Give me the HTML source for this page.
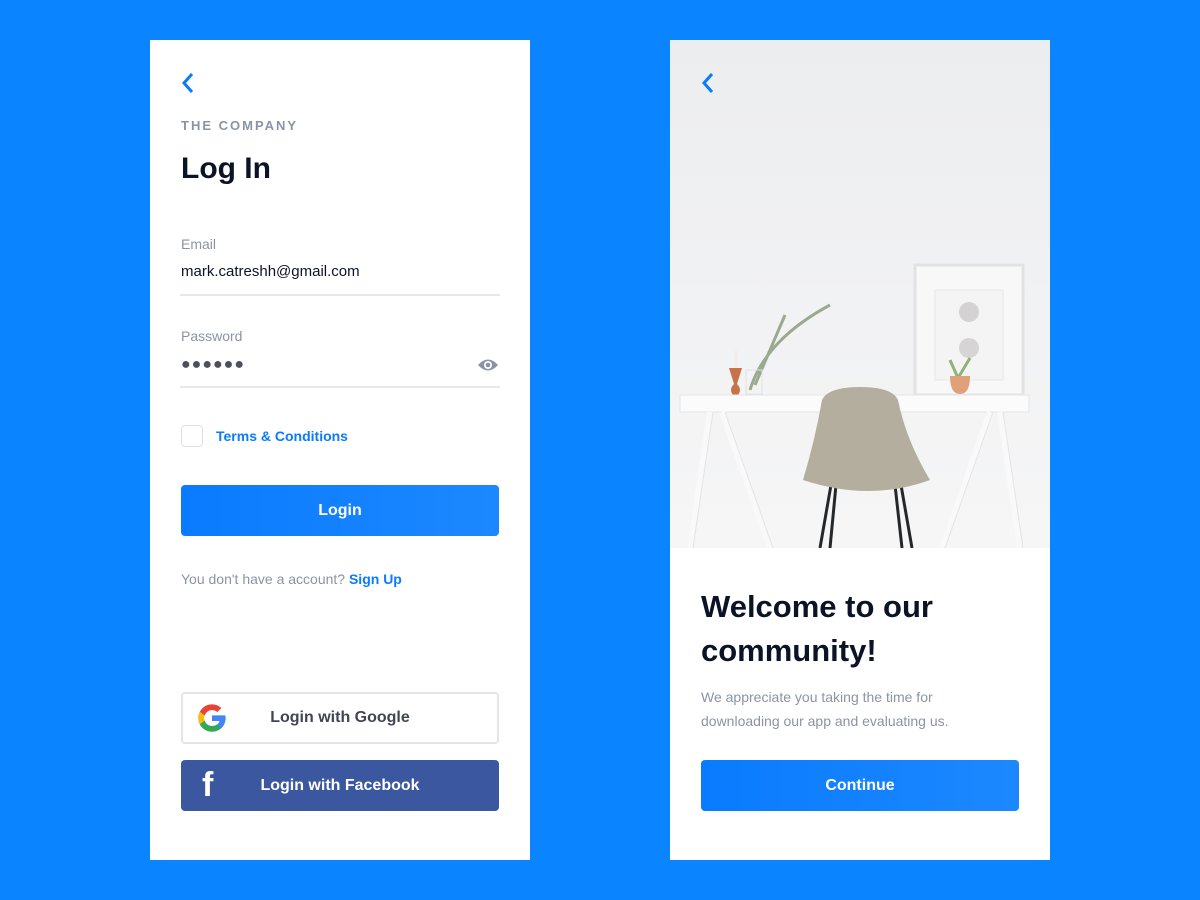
<!DOCTYPE html>
<html><head><style>
*{margin:0;padding:0;box-sizing:border-box}
body{width:1200px;height:900px;background:#0a85ff;font-family:"Liberation Sans",sans-serif;position:relative;overflow:hidden}
.card{position:absolute;top:40px;width:380px;height:820px;background:#fff}
.a{position:absolute}
.lbl{font-size:14px;color:#8a94a6}
.btn{position:absolute;left:31px;width:318px;height:51px;border-radius:4px;background:linear-gradient(90deg,#0a7bff,#1c88ff);color:#fff;font-weight:bold;font-size:16px;display:flex;align-items:center;justify-content:center}
</style></head><body>
<div class="card" style="left:150px">
<svg class="a" style="left:30px;top:32px" width="16" height="22"><path d="M12 2 L4 11 L12 20" stroke="#0a7bff" stroke-width="3" fill="none"/></svg>
<div class="a" style="left:31px;top:78px;font-size:13px;font-weight:bold;letter-spacing:2px;color:#8a94a6">THE COMPANY</div>
<div class="a" style="left:31px;top:112px;font-size:30px;font-weight:bold;color:#0b1426">Log In</div>
<div class="a lbl" style="left:31px;top:196px">Email</div>
<div class="a" style="left:31px;top:223px;font-size:15px;color:#0b1426">mark.catreshh@gmail.com</div>
<div class="a" style="left:30px;top:254px;width:320px;height:2px;background:#e6e8ec"></div>
<div class="a lbl" style="left:31px;top:288px">Password</div>
<div class="a" style="left:31px;top:316px;font-size:16px;letter-spacing:1px;color:#4a505c">●●●●●●</div>
<svg class="a" style="left:327px;top:317px" width="22" height="16"><path d="M1 8 Q11 -3 21 8 Q11 19 1 8Z" fill="#8a94a6"/><circle cx="11" cy="8" r="4" fill="#fff"/><circle cx="11" cy="8" r="2.3" fill="#8a94a6"/></svg>
<div class="a" style="left:30px;top:346px;width:320px;height:2px;background:#e6e8ec"></div>
<div class="a" style="left:31px;top:385px;width:22px;height:22px;border:1.5px solid #dde0e5;border-radius:4px"></div>
<div class="a" style="left:66px;top:388px;font-size:14px;font-weight:bold;color:#0a7bff">Terms &amp; Conditions</div>
<div class="btn" style="top:445px">Login</div>
<div class="a" style="left:31px;top:531px;font-size:14px;color:#8a94a6">You don't have a account? <b style="color:#0a7bff">Sign Up</b></div>
<div class="a" style="left:31px;top:652px;width:318px;height:52px;border:2px solid #e3e5e9;border-radius:4px;display:flex;align-items:center;justify-content:center;font-size:16px;font-weight:bold;color:#3f4653">Login with Google</div>
<svg class="a" style="left:46px;top:662px" width="32" height="32" viewBox="0 0 48 48"><path d="M43.6 20H24v8.5h11.3C33.7 33.6 29.3 36 24 36c-6.6 0-12-5.4-12-12s5.4-12 12-12c3 0 5.8 1.1 7.900 3l6-6C34.3 5.6 29.4 3.5 24 3.5 12.7 3.5 3.5 12.7 3.5 24S12.7 44.5 24 44.5 44.5 36 44.5 24c0-1.4-.2-2.7-.9-4z" fill="#4285f4"/><path d="M6.3 14.7l7 5.1C15.1 15.3 19.2 12 24 12c3 0 5.8 1.1 7.9 3l6-6C34.3 5.6 29.4 3.5 24 3.5c-7.9 0-14.7 4.5-17.7 11.2z" fill="#ea4335"/><path d="M24 44.5c5.3 0 10.1-2 13.6-5.3l-6.3-5.3C29.3 35.3 26.8 36 24 36c-5.3 0-9.7-3.4-11.3-8.1l-7 5.4C9 40 16 44.5 24 44.5z" fill="#34a853"/><path d="M12.7 27.9c-.4-1.2-.7-2.5-.7-3.9s.3-2.7.7-3.9l-7-5.4C4.3 17.5 3.5 20.7 3.5 24s.8 6.5 2.2 9.3z" fill="#fbbc05"/></svg>
<div class="a" style="left:31px;top:720px;width:318px;height:51px;border-radius:4px;background:#3b57a0;color:#fff;font-weight:bold;font-size:16px;display:flex;align-items:center;justify-content:center">Login with Facebook</div>
<div class="a" style="left:52px;top:726px;font-size:34px;font-weight:bold;color:#fff">f</div>
</div>
<div class="card" style="left:670px">
<svg class="a" style="left:0;top:0" width="380" height="508">
<defs><linearGradient id="w" x1="0" y1="0" x2="0" y2="1"><stop offset="0" stop-color="#ecedef"/><stop offset="1" stop-color="#f6f6f7"/></linearGradient></defs>
<rect width="380" height="508" fill="url(#w)"/>
<rect x="245" y="225" width="108" height="130" fill="#f8f8f8" stroke="#e2e2e4" stroke-width="3"/>
<rect x="265" y="250" width="68" height="90" fill="#f4f4f5" stroke="#e9e9eb"/>
<circle cx="299" cy="272" r="10" fill="#d4d2d2"/><circle cx="299" cy="308" r="10" fill="#d6d4d4"/>
<path d="M80 350 Q95 300 160 265 M85 345 Q100 310 115 275" stroke="#9aaa8e" stroke-width="3" fill="none"/>
<rect x="76" y="330" width="16" height="24" fill="none" stroke="#dfe1e1"/>
<rect x="64" y="310" width="4" height="18" fill="#f2efe8"/>
<path d="M59 328 h13 l-5 16 q6 6 0 12 h-3 q-6 -6 0 -12z" fill="#c67348"/>
<path d="M280 320 l8 18 l12 -20" stroke="#8fb377" stroke-width="3" fill="none"/>
<path d="M280 336 h20 q0 18 -10 18 q-10 0 -10 -18z" fill="#e0a17a"/>
<rect x="10" y="355" width="349" height="17" fill="#fbfbfb" stroke="#e6e6e8"/>
<path d="M40 372 L20 508 M52 372 L100 508 M320 372 L272 508 M330 372 L350 508" stroke="#f9f9f9" stroke-width="6"/>
<path d="M40 372 L20 508 M52 372 L100 508 M320 372 L272 508 M330 372 L350 508" stroke="#e4e4e6" stroke-width="1" transform="translate(3,0)"/>
<path d="M161 445 L150 508 M166 445 L160 508 M225 445 L232 508 M231 445 L242 508" stroke="#25282a" stroke-width="3"/>
<path d="M133 440 Q145 400 152 360 Q158 347 190 347 Q222 347 228 360 Q236 400 260 440 Q200 462 133 440z" fill="#b4ae9f"/>
</svg>
<svg class="a" style="left:30px;top:32px" width="16" height="22"><path d="M12 2 L4 11 L12 20" stroke="#0a7bff" stroke-width="3" fill="none"/></svg>
<div class="a" style="left:31px;top:545px;font-size:31px;line-height:44px;font-weight:bold;color:#0b1426">Welcome to our<br>community!</div>
<div class="a" style="left:31px;top:645px;font-size:14px;line-height:24px;color:#8a94a6">We appreciate you taking the time for<br>downloading our app and evaluating us.</div>
<div class="btn" style="top:720px">Continue</div>
</div>
</body></html>
